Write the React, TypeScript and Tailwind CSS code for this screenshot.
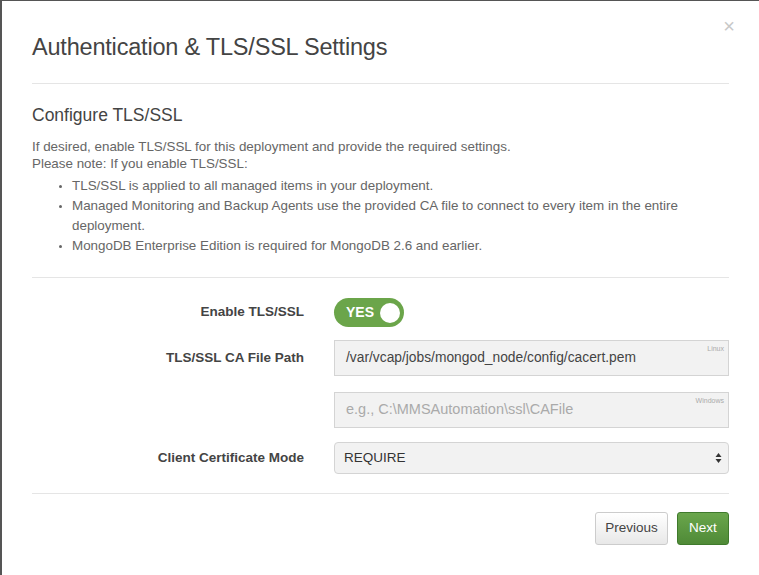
import React from 'react';

const font = { fontFamily: '"Liberation Sans", Arial, sans-serif' };

const App = () => {
    return (
        <div className="w-[759px] h-[575px] bg-white border-l-2 border-t border-[#555] overflow-hidden relative text-[#555]" style={font}>
            <button className="absolute right-[24px] top-[15px] text-[#c8c8c8] text-[20px] leading-none font-light">×</button>
            <div className="px-[30px]">
                <h1 className="pt-[32px] pb-[21px] text-[23.5px] leading-[29px] text-[#444] font-normal tracking-[-0.2px]">Authentication &amp; TLS/SSL Settings</h1>
                <div className="border-t border-[#e5e5e5]"></div>

                <h2 className="mt-[20px] text-[17.5px] leading-[22px] text-[#444]">Configure TLS/SSL</h2>
                <div className="mt-[12px] text-[13.4px] text-[#666]">
                    <p className="leading-[17px]">If desired, enable TLS/SSL for this deployment and provide the required settings.</p>
                    <p className="leading-[17px]">Please note: If you enable TLS/SSL:</p>
                    <ul className="mt-[4px] leading-[20px] list-disc pl-[40px] pr-[20px] marker:text-[10px]">
                        <li>TLS/SSL is applied to all managed items in your deployment.</li>
                        <li>Managed Monitoring and Backup Agents use the provided CA file to connect to every item in the entire deployment.</li>
                        <li>MongoDB Enterprise Edition is required for MongoDB 2.6 and earlier.</li>
                    </ul>
                </div>
                <div className="mt-[21px] border-t border-[#e5e5e5]"></div>

                <div className="mt-[20px] flex flex-col">
                    <div className="flex items-center">
                        <div className="w-[272px] text-right text-[13.5px] font-bold text-[#444]">Enable TLS/SSL</div>
                        <div className="ml-[30px] w-[70px] h-[29px] rounded-full bg-[#6ba54a] flex items-center justify-between pl-[12px] pr-[4px]">
                            <span className="text-white font-bold text-[14px]">YES</span>
                            <span className="w-[20px] h-[20px] rounded-full bg-white"></span>
                        </div>
                    </div>
                    <div className="mt-[13px] flex items-center">
                        <div className="w-[272px] text-right text-[13.5px] font-bold text-[#444]">TLS/SSL CA File Path</div>
                        <div className="ml-[30px] flex-1 h-[36px] bg-[#f2f2f2] border border-[#d4d4d4] relative flex items-center px-[11px] text-[13.8px] text-[#444]">
                            /var/vcap/jobs/mongod_node/config/cacert.pem
                            <span className="absolute right-[4px] top-[3px] text-[7px] text-[#aaa]">Linux</span>
                        </div>
                    </div>
                    <div className="mt-[16px] flex items-center">
                        <div className="w-[272px]"></div>
                        <div className="ml-[30px] flex-1 h-[36px] bg-[#f2f2f2] border border-[#d4d4d4] relative flex items-center px-[11px] text-[14.5px] text-[#aaa]">
                            e.g., C:\MMSAutomation\ssl\CAFile
                            <span className="absolute right-[4px] top-[3px] text-[7px] text-[#aaa]">Windows</span>
                        </div>
                    </div>
                    <div className="mt-[14px] flex items-center">
                        <div className="w-[272px] text-right text-[13.5px] font-bold text-[#444]">Client Certificate Mode</div>
                        <div className="ml-[30px] flex-1 h-[32px] bg-[#f2f2f2] border border-[#d4d4d4] rounded-[4px] flex items-center justify-between pl-[9px] pr-[6px] text-[13.5px] text-[#333]">
                            <span>REQUIRE</span>
                            <svg width="7" height="12" viewBox="0 0 7 12"><path d="M3.5 1 L6.5 5 L0.5 5 Z" fill="#333" /><path d="M3.5 11 L6.5 7 L0.5 7 Z" fill="#333" /></svg>
                        </div>
                    </div>
                </div>

                <div className="mt-[19px] border-t border-[#e5e5e5]"></div>
                <div className="mt-[18px] flex justify-end gap-[9px]">
                    <button className="h-[33px] w-[73px] text-[13.5px] text-[#444] border border-[#ccc] rounded-[3px] bg-gradient-to-b from-white to-[#e8e8e8]">Previous</button>
                    <button className="h-[33px] w-[52px] text-[13.5px] text-white border border-[#3f7a2c] rounded-[3px] bg-gradient-to-b from-[#6aa64c] to-[#4f8a37]">Next</button>
                </div>
            </div>
        </div>
    );
};

export default App;
